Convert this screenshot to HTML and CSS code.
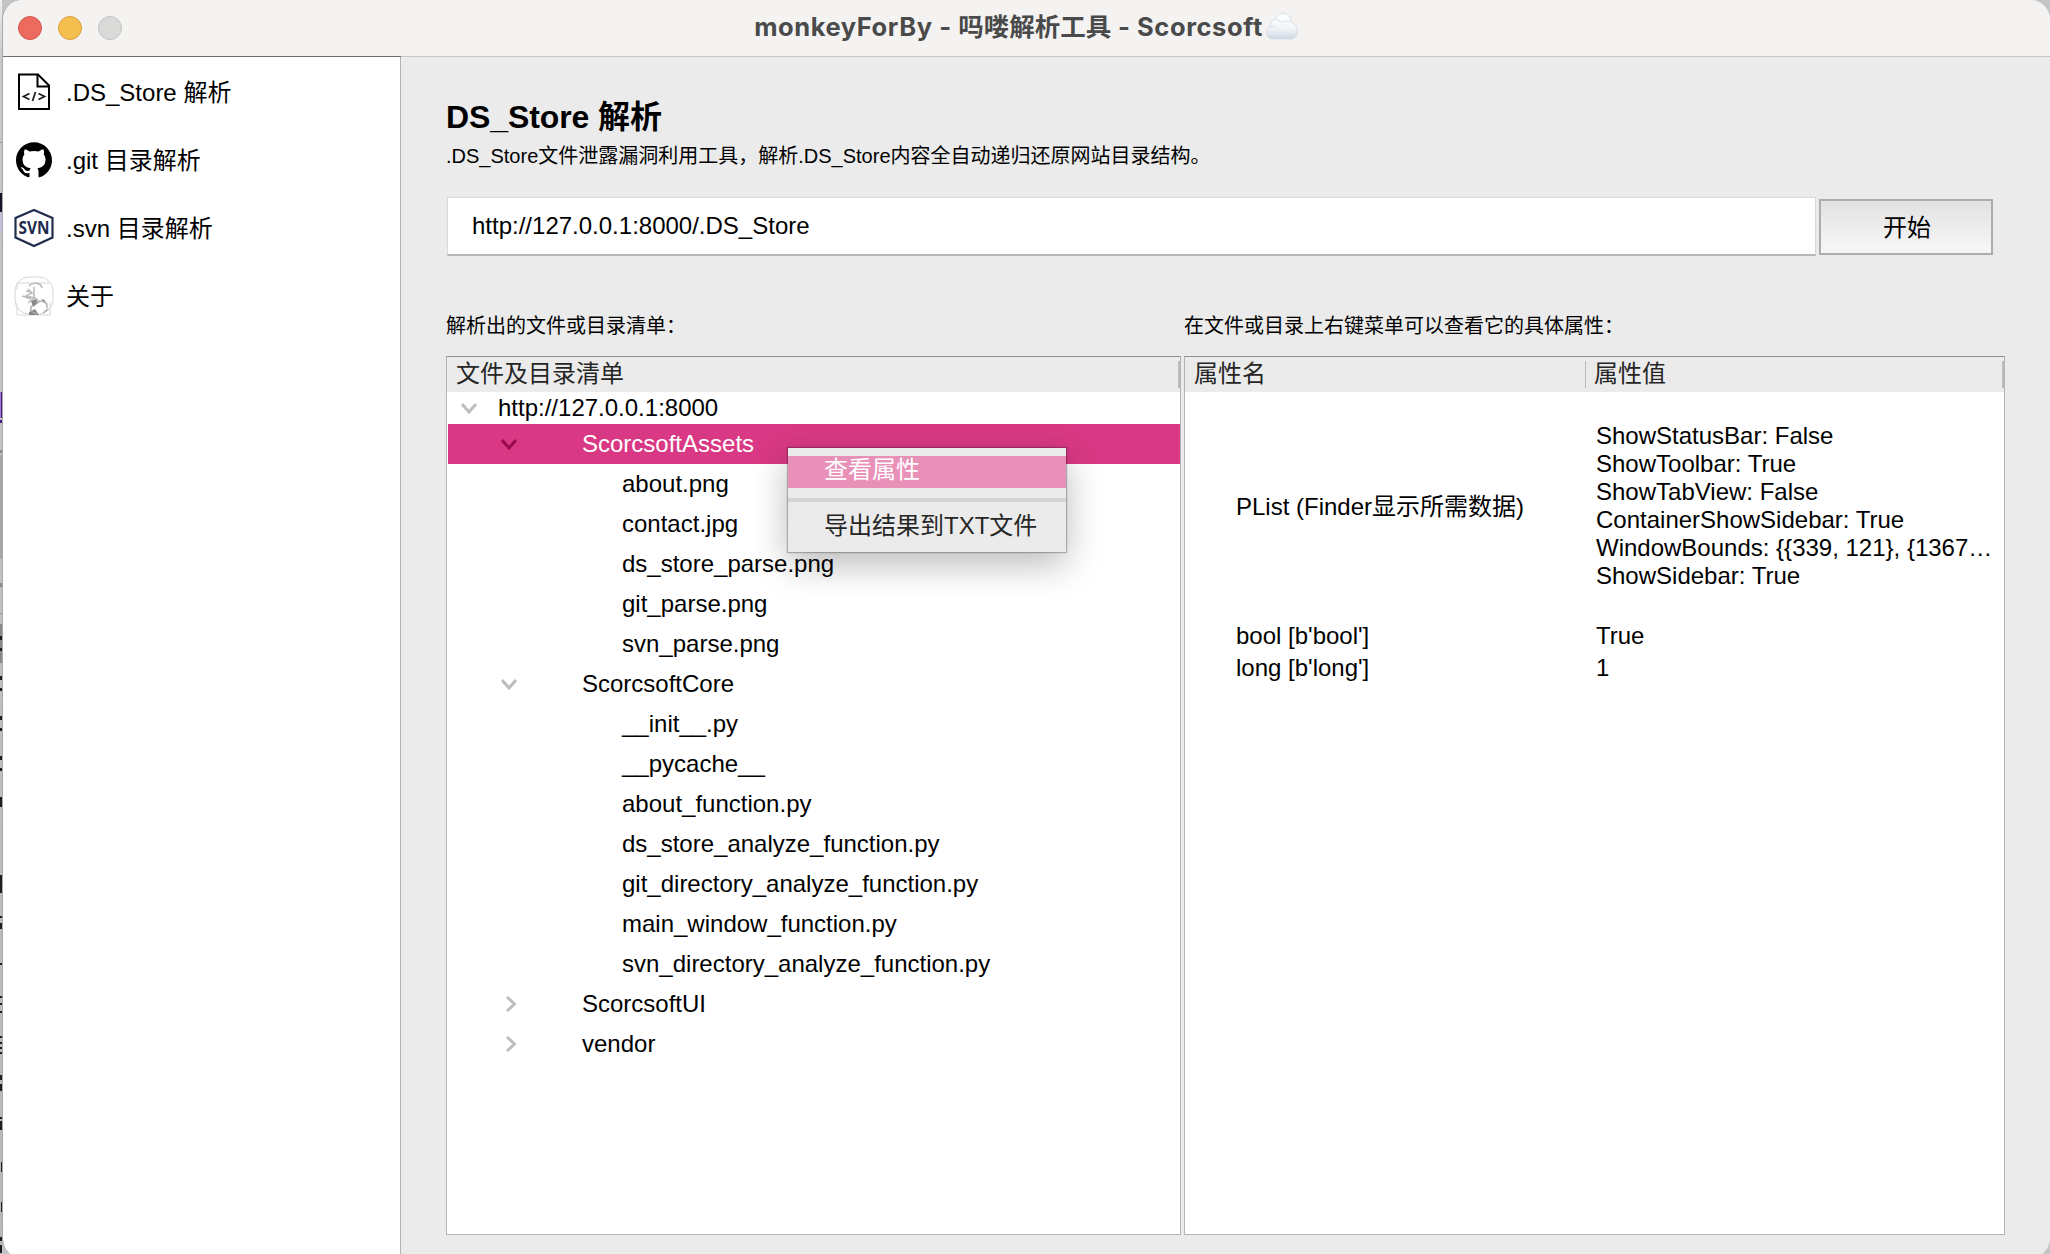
FILE: index.html
```html
<!DOCTYPE html>
<html lang="zh-CN">
<head>
<meta charset="utf-8">
<title>monkeyForBy - 吗喽解析工具 - Scorcsoft</title>
<link rel="stylesheet" href="styles.css">
</head>
<body>
<svg class="desktop-edge" viewBox="0 0 2 1254" preserveAspectRatio="none">
  <path d="M0 142H2V143H0ZM0 613H2V614H0Z" fill="#9a9a9e"/>
  <path d="M0 213H2V233H0Z" fill="#c3c0dc"/>
  <path d="M0 193H2V212H0Z" fill="#17142a"/>
  <path d="M0 392H2V418H0Z" fill="#a67bd0"/>
  <path d="M1 392H2V418H1ZM0 420H2V423H0Z" fill="#45207c"/>
  <path d="M0 455H2V559H0Z" fill="#a6a5a7"/>
  <path d="M0 450H2V453H0ZM0 583H2V587H0ZM0 624H2V663H0Z" fill="#88888b"/>
  <path d="M0 636H2V640H0ZM0 648H2V651H0ZM0 676H2V680H0ZM0 688H2V691H0ZM0 716H2V720H0ZM0 728H2V731H0ZM0 756H2V760H0ZM0 768H2V771H0ZM0 797H2V807H0ZM0 875H2V893H0ZM0 916H2V918H0ZM0 923H2V929H0ZM0 963H2V965H0ZM0 996H2V998H0ZM0 1003H2V1005H0ZM0 1011H2V1013H0ZM0 1036H2V1038H0ZM0 1042H2V1044H0ZM0 1047H2V1049H0ZM0 1052H2V1054H0ZM0 1075H2V1080H0ZM0 1084H2V1091H0ZM0 1117H2V1119H0ZM0 1121H2V1130H0ZM1 1162H2V1172H1ZM1 1202H2V1212H1ZM0 1237H2V1241H0ZM0 1245H2V1253H0Z" fill="#1e1e20"/>
</svg>
<div class="window">
  <header class="titlebar">
    <div class="lights"><i class="light close"></i><i class="light minimize"></i><i class="light disabled"></i></div>
    <h1 class="window-title"><span class="title-latin">monkeyForBy - </span><span>吗喽解析工具</span><span class="title-latin"> - Scorcsoft</span><svg class="cloud" viewBox="0 0 34 30"><defs><linearGradient id="cloudFill" x1="0" y1="0" x2="0" y2="1"><stop offset="0" stop-color="#ffffff"/><stop offset=".6" stop-color="#f1f5f9"/><stop offset="1" stop-color="#ccd6e1"/></linearGradient></defs><path d="M8 27C4 27 1.500 24.500 1.500 21C1.500 18 3.300 15.700 6 15C4.500 11 7 7.500 10.500 7.500C11.500 4 14.500 1.500 18 1.500C23 1.500 26 5 26 10C29.500 11 32.500 15 32.500 19.500C32.500 24 29.500 27 25.500 27Z" fill="url(#cloudFill)" stroke="#d5dde5" stroke-width="1"/><path d="M6 15C9 14 11.500 15 12.500 17M11 8C14 8 16 9 17 11C19 8.800 23 8.500 26 10" fill="none" stroke="#dde4ea"/></svg></h1>
  </header>
  <div class="body">
    <nav class="sidebar">
      <a class="nav-item"><svg class="nav-icon" viewBox="0 0 40 40"><path d="M5 2.500H24L35 13.500V37H5Z" fill="#fff" stroke="#000" stroke-width="2"/><path d="M23.500 3V14.500H35" fill="none" stroke="#000" stroke-width="2"/><path d="M15.500 21.500L9.500 24.500L15.500 27.500M24.500 21.500L30.500 24.500L24.500 27.500M21.500 20L18.500 29" fill="none" stroke="#222" stroke-width="1.800"/></svg><span>.DS_Store 解析</span></a>
      <a class="nav-item"><svg class="nav-icon" viewBox="0 0 40 40"><path transform="translate(2 2.200) scale(2.250)" d="M8 0C3.580 0 0 3.580 0 8c0 3.540 2.290 6.530 5.470 7.590.4.070.55-.17.55-.38 0-.19-.01-.82-.01-1.490-2.010.37-2.530-.49-2.690-.94-.09-.23-.48-.94-.82-1.130-.28-.15-.68-.52-.01-.53.63-.01 1.080.58 1.230.82.72 1.210 1.870.87 2.330.66.070-.52.280-.87.510-1.070-1.780-.2-3.640-.89-3.640-3.950 0-.87.310-1.590.82-2.150-.08-.2-.36-1.020.080-2.120 0 0 .67-.21 2.200.82.64-.18 1.320-.27 2-.27s1.360.09 2 .27c1.530-1.040 2.200-.82 2.200-.82.44 1.100.16 1.920.08 2.120.51.56.82 1.270.82 2.150 0 3.070-1.870 3.750-3.650 3.950.29.25.54.73.54 1.480 0 1.070-.01 1.930-.01 2.200 0 .21.15.46.55.38A8.010 8.010 0 0 0 16 8c0-4.420-3.580-8-8-8z"/></svg><span>.git 目录解析</span></a>
      <a class="nav-item"><svg class="nav-icon" viewBox="0 0 40 40"><path d="M20 2L38.500 10V29.500L20 38L1.500 29.500V10Z" fill="#fff" stroke="#202b4d" stroke-width="2.200"/><text class="svn-mark" x="20" y="26" text-anchor="middle" textLength="31" lengthAdjust="spacingAndGlyphs">SVN</text></svg><span>.svn 目录解析</span></a>
      <a class="nav-item"><svg class="nav-icon" viewBox="0 0 40 40"><g fill="none" stroke="#d6d6d6" stroke-width="1"><rect x="1" y="1" width="38" height="37" rx="14"/><path d="M3 27V39H36V27M3 14V7H35"/></g><path d="M15 10C18 6 27 6 28 12M14 13L18 17L12 20L20 22L14 27M20 11V21L25 25M17 16L12 15M8 20L17 23" fill="none" stroke="#bbb" stroke-width="1.600"/><path d="M17 25L22 23L24 27L19 31ZM27 23L31 24L30 27ZM15 36L21 33L25 39H15Z" fill="#888"/><path d="M19 29C14 33 18 37 23 38M22 28C26 23 34 25 33 32M29 37L34 33" fill="none" stroke="#aaa" stroke-width="1.400"/></svg><span>关于</span></a>
    </nav>
    <main class="content">
      <h2 class="page-title">DS_Store 解析</h2>
      <p class="page-desc">.DS_Store文件泄露漏洞利用工具，解析.DS_Store内容全自动递归还原网站目录结构。</p>
      <div class="url-bar">
        <div class="url-field">http://127.0.0.1:8000/.DS_Store</div>
        <button class="start">开始</button>
      </div>
      <div class="panels">
        <section class="files">
          <p class="label">解析出的文件或目录清单：</p>
          <div class="panel">
            <div class="panel-head"><span class="head-cell">文件及目录清单</span></div>
            <ul class="tree">
              <li class="row root"><svg class="chev" viewBox="0 0 16 16"><path d="M1 4L8 12L15 4"/></svg>http://127.0.0.1:8000</li>
              <li class="row folder selected"><svg class="chev" viewBox="0 0 16 16"><path d="M1 4L8 12L15 4"/></svg>ScorcsoftAssets</li>
              <li class="row file">about.png</li>
              <li class="row file">contact.jpg</li>
              <li class="row file">ds_store_parse.png</li>
              <li class="row file">git_parse.png</li>
              <li class="row file">svn_parse.png</li>
              <li class="row folder"><svg class="chev" viewBox="0 0 16 16"><path d="M1 4L8 12L15 4"/></svg>ScorcsoftCore</li>
              <li class="row file">__init__.py</li>
              <li class="row file">__pycache__</li>
              <li class="row file">about_function.py</li>
              <li class="row file">ds_store_analyze_function.py</li>
              <li class="row file">git_directory_analyze_function.py</li>
              <li class="row file">main_window_function.py</li>
              <li class="row file">svn_directory_analyze_function.py</li>
              <li class="row folder"><svg class="chev" viewBox="0 0 16 16"><path d="M6 1L13.500 8L6 15"/></svg>ScorcsoftUI</li>
              <li class="row folder"><svg class="chev" viewBox="0 0 16 16"><path d="M6 1L13.500 8L6 15"/></svg>vendor</li>
            </ul>
            <div class="menu">
              <div class="menu-item active">查看属性</div>
              <div class="menu-sep"></div>
              <div class="menu-item">导出结果到TXT文件</div>
            </div>
          </div>
        </section>
        <section class="props">
          <p class="label">在文件或目录上右键菜单可以查看它的具体属性：</p>
          <div class="panel">
            <div class="panel-head"><span class="head-cell name">属性名</span><span class="head-cell value">属性值</span></div>
            <div class="prop plist"><span class="prop-name">PList (Finder显示所需数据)</span><span class="prop-value">ShowStatusBar: False<br>ShowToolbar: True<br>ShowTabView: False<br>ContainerShowSidebar: True<br>WindowBounds: {{339, 121}, {1367…<br>ShowSidebar: True</span></div>
            <div class="prop"><span class="prop-name">bool [b'bool']</span><span class="prop-value">True</span></div>
            <div class="prop"><span class="prop-name">long [b'long']</span><span class="prop-value">1</span></div>
          </div>
        </section>
      </div>
    </main>
  </div>
</div>
</body>
</html>
```

FILE: styles.css
```css
* { box-sizing: border-box; }
body {
  margin: 0;
  width: 2050px;
  height: 1254px;
  overflow: hidden;
  display: flex;
  background: #c4c4c6;
  color: #000;
  font: 24px/28px "Liberation Sans", "Noto Sans CJK SC", sans-serif;
}
h1, h2, p, ul { margin: 0; padding: 0; }
.desktop-edge { width: 2px; height: 1254px; flex: none; background: linear-gradient(#eee 0, #c8c8ca 60px, #b8b8bb 100%); }
.window {
  flex: none;
  width: 2048px;
  height: 1258px;
  display: flex;
  flex-direction: column;
  border-left: 1px solid #a9a9a9;
  border-radius: 20px;
  overflow: hidden;
  background: #ebebeb;
}
.titlebar {
  height: 57px;
  flex: none;
  display: grid;
  grid-template-columns: 400px 1fr 400px;
  align-items: center;
  background: #f4f3f2;
  border-bottom: 1px solid #c6c5c4;
}
.lights { display: flex; gap: 16px; padding-left: 15px; }
.light { width: 24px; height: 24px; border-radius: 50%; border: 1px solid #d6564c; background: #ed6a5e; }
.light.minimize { background: #f5bf4f; border-color: #d8a13d; }
.light.disabled { background: #dadad9; border-color: #c2c2c1; }
.window-title {
  display: flex;
  justify-content: center;
  align-items: center;
  white-space: pre;
  padding-bottom: 2px;
  font: 700 25.500px/54px Inter, "Noto Sans CJK SC", sans-serif;
  color: #4a4a4a;
}
.title-latin { letter-spacing: .58px; }
.cloud { width: 34px; height: 30px; margin-left: 2px; }
.body { flex: 1; min-height: 0; display: flex; }
.sidebar {
  width: 398px;
  flex: none;
  background: #fff;
  border-right: 1px solid #b4b4b4;
  box-shadow: 0 -1px #6e6e6e;
  padding-top: 1px;
}
.nav-item { display: flex; align-items: center; gap: 12px; height: 68px; padding-left: 11px; }
.nav-item span { padding-top: 2px; }
.nav-icon { width: 40px; height: 40px; flex: none; }
.svn-mark { font: 700 17px "Open Sans", sans-serif; fill: #202b4d; }
.content { flex: 1; min-width: 0; padding: 43px 45px 23px 45px; display: flex; flex-direction: column; }
.page-title { font-size: 32px; line-height: 34px; letter-spacing: -.1px; }
.page-desc, .label { font-size: 20px; line-height: 24px; white-space: nowrap; }
.page-desc { margin-top: 10px; }
.url-bar { display: flex; align-items: center; gap: 3px; margin-top: 29px; padding-right: 12px; }
.url-field {
  flex: 1;
  height: 59px;
  margin-left: 1px;
  padding: 14px 0 0 24px;
  background: #fff;
  border: 1px solid #d9d9d9;
  border-bottom: 2px solid #b6b6b6;
}
.start {
  width: 174px;
  height: 56px;
  margin-top: 1px;
  padding: 2px 0 0 2px;
  border: 2px solid #adadad;
  background: linear-gradient(#e2e2e2, #f7f7f7);
  font: inherit;
  color: #000;
}
.panels { flex: 1; min-height: 0; display: flex; gap: 3px; margin-top: 58px; }
.files, .props { display: flex; flex-direction: column; }
.files { width: 735px; }
.props { width: 821px; }
.panel {
  position: relative;
  flex: 1;
  margin-top: 18px;
  background: #fff;
  border: 1px solid #b4b4b4;
  border-top-color: #8e8e8e;
}
.panel-head { display: flex; height: 35px; background: #ebebeb; color: #262626; padding: 4px 0; }
.head-cell { flex: 1; padding-left: 9px; line-height: 26px; border-right: 2px solid #bcbcbc; }
.head-cell.name { flex: none; width: 401px; border-right-width: 1px; }
.head-cell.value { padding-left: 8px; }
.tree { list-style: none; padding-left: 1px; }
.row { display: flex; align-items: center; height: 40px; padding-left: 174px; }
.row.root { height: 32px; padding-left: 13px; gap: 21px; }
.row.folder { padding-left: 53px; gap: 65px; }
.row.selected { background: #d93984; color: #fff; }
.chev { width: 16px; height: 16px; flex: none; }
.chev path { fill: none; stroke: #bdbdbd; stroke-width: 3; }
.selected .chev path { stroke: #9c0a50; }
.menu {
  position: absolute;
  left: 341px;
  top: 91px;
  width: 278px;
  height: 104px;
  padding-top: 8px;
  background: #ebebeb;
  color: #262626;
  box-shadow: 0 0 1px 1px rgba(0, 0, 0, .25), 0 12px 36px rgba(0, 0, 0, .28);
}
.menu-item { height: 32px; padding-left: 36px; line-height: 28px; }
.menu-item.active { background: #e890b8; color: #fff; }
.menu-sep { height: 4px; margin: 10px 0; background: #d4d4d4; }
.prop { display: flex; height: 32px; align-items: center; padding-left: 51px; }
.prop-name { width: 360px; flex: none; }
.prop-value { white-space: nowrap; }
.prop.plist { height: 228px; }
.plist .prop-name { padding-top: 2px; }
```
